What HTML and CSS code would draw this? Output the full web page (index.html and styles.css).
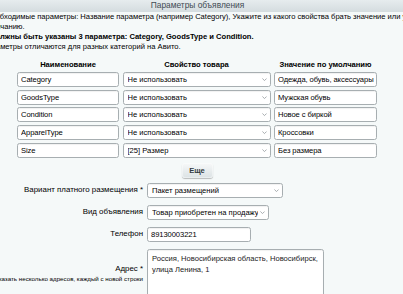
FILE: index.html
```html
<!DOCTYPE html>
<html lang="ru">
<head>
<meta charset="utf-8">
<title>Параметры объявления</title>
<link rel="stylesheet" href="styles.css">
</head>
<body>
<div class="title">Параметры объявления</div>
<div class="notes">
  <div class="line l1">Необходимые параметры: Название параметра (например Category), Укажите из какого свойства брать значение или укажите значение по</div>
  <div class="line l2">умолчанию.</div>
  <div class="line l3">Должны быть указаны 3 параметра: Category, GoodsType и Condition.</div>
  <div class="line l4">Параметры отличаются для разных категорий на Авито.</div>
</div>

<div class="params">
  <div class="th">Наименование</div>
  <div class="th">Свойство товара</div>
  <div class="th">Значение по умолчанию</div>

  <input class="inp" type="text" value="Category">
  <div class="sel"><select class="box"><option selected>Не использовать</option></select><svg class="chev" viewBox="0 0 6 4"><path d="M0.5 0.5 L3 3 L5.5 0.5" fill="none" stroke="#8c9296" stroke-width="0.9"/></svg></div>
  <input class="inp" type="text" value="Одежда, обувь, аксессуары">

  <input class="inp" type="text" value="GoodsType">
  <div class="sel"><select class="box"><option selected>Не использовать</option></select><svg class="chev" viewBox="0 0 6 4"><path d="M0.5 0.5 L3 3 L5.5 0.5" fill="none" stroke="#8c9296" stroke-width="0.9"/></svg></div>
  <input class="inp" type="text" value="Мужская обувь">

  <input class="inp" type="text" value="Condition">
  <div class="sel"><select class="box"><option selected>Не использовать</option></select><svg class="chev" viewBox="0 0 6 4"><path d="M0.5 0.5 L3 3 L5.5 0.5" fill="none" stroke="#8c9296" stroke-width="0.9"/></svg></div>
  <input class="inp" type="text" value="Новое с биркой">

  <input class="inp" type="text" value="ApparelType">
  <div class="sel"><select class="box"><option selected>Не использовать</option></select><svg class="chev" viewBox="0 0 6 4"><path d="M0.5 0.5 L3 3 L5.5 0.5" fill="none" stroke="#8c9296" stroke-width="0.9"/></svg></div>
  <input class="inp" type="text" value="Кроссовки">

  <input class="inp" type="text" value="Size">
  <div class="sel"><select class="box"><option selected>[25] Размер</option></select><svg class="chev" viewBox="0 0 6 4"><path d="M0.5 0.5 L3 3 L5.5 0.5" fill="none" stroke="#8c9296" stroke-width="0.9"/></svg></div>
  <input class="inp" type="text" value="Без размера">
</div>

<div class="more"><button class="btn" type="button">Еще</button></div>

<div class="form">
  <div class="lbl">Вариант платного размещения *</div>
  <div class="sel w-pack"><select class="box"><option selected>Пакет размещений</option></select><svg class="chev" viewBox="0 0 6 4"><path d="M0.5 0.5 L3 3 L5.5 0.5" fill="none" stroke="#8c9296" stroke-width="0.9"/></svg></div>

  <div class="lbl">Вид объявления</div>
  <div class="sel w-kind"><select class="box"><option selected>Товар приобретен на продажу</option></select><svg class="chev" viewBox="0 0 6 4"><path d="M0.5 0.5 L3 3 L5.5 0.5" fill="none" stroke="#8c9296" stroke-width="0.9"/></svg></div>

  <div class="lbl">Телефон</div>
  <div class="fld"><input class="inp w-phone" type="text" value="89130003221"></div>

  <div class="lbl lbl-addr">
    <div class="addr-title">Адрес *</div>
    <div class="addr-note">Можно указать несколько адресов, каждый с новой строки</div>
  </div>
  <div class="fld"><textarea class="area">Россия, Новосибирская область, Новосибирск, улица Ленина, 1</textarea></div>
</div>
</body>
</html>
```

FILE: styles.css
```css
* {
  box-sizing: border-box;
}

html,
body {
  margin: 0;
  padding: 0;
}

body {
  width: 403px;
  height: 294px;
  overflow: hidden;
  background: #f5f9f9;
  font-family: "Liberation Sans", Arial, sans-serif;
  font-size: 7.6px;
  color: #000;
}

.title {
  height: 12px;
  line-height: 10px;
  padding-right: 8px;
  text-align: center;
  font-size: 8.4px;
  color: #3f4b54;
  background: linear-gradient(#e6ecee, #d4dcdf);
}

.notes {
  white-space: nowrap;
  overflow: hidden;
}

.line {
  height: 10px;
  line-height: 10px;
}

.l1 { margin-left: -14px; letter-spacing: -0.02px; }
.l2 { margin-left: -17px; }
.l3 { margin-left: -10px; font-weight: bold; }
.l4 { margin-left: -18px; }

.params {
  display: grid;
  grid-template-columns: 102px 148px 103px;
  column-gap: 3.5px;
  row-gap: 2.75px;
  width: max-content;
  margin: 7px 0 0 17px;
}

.th {
  height: 10px;
  line-height: 11px;
  text-align: center;
  font-weight: bold;
}

.inp,
.box,
.area {
  height: 15px;
  margin: 0;
  border: 1px solid #a7aeb1;
  border-radius: 2.5px;
  background: #fff;
  box-shadow: inset 0 1px 1px rgba(0, 0, 0, 0.06);
  font-family: inherit;
  font-size: 7.6px;
  color: #000;
  padding: 0 2px 0 3px;
  outline: none;
}

.inp {
  width: 100%;
  letter-spacing: -0.08px;
}

.sel {
  position: relative;
}

.box {
  width: 100%;
  padding: 0 10px 0 4px;
  appearance: none;
  -webkit-appearance: none;
}

.chev {
  position: absolute;
  right: 4px;
  top: 6px;
  width: 5px;
  height: 3.5px;
  pointer-events: none;
}

.more {
  display: flex;
  justify-content: center;
  width: 360px;
  margin: 5px 0 0 17px;
}

.btn {
  width: 31px;
  height: 15px;
  padding: 0;
  border: none;
  border-radius: 3px;
  background: linear-gradient(#f7f9f9, #dbe2e4);
  box-shadow: 0 1px 1px rgba(0, 0, 0, 0.25), inset 0 0 0 1px rgba(255, 255, 255, 0.4);
  font-family: inherit;
  font-size: 7.6px;
  font-weight: bold;
  color: #333b40;
}

.form {
  display: grid;
  grid-template-columns: 200px auto;
  column-gap: 4px;
  row-gap: 7px;
  align-items: center;
  margin: 5px 0 0 -57px;
}

.lbl {
  text-align: right;
  white-space: nowrap;
  line-height: 10px;
  font-size: 7.9px;
}

.fld {
  display: flex;
}

.w-pack { width: 136px; }
.w-kind { width: 122px; }
.w-phone { width: 104px; }

.addr-note {
  font-size: 6.2px;
}

.area {
  width: 177px;
  height: 50px;
  padding: 3px 4px;
  line-height: 11px;
  color: #222;
  resize: none;
  overflow: hidden;
}
```
